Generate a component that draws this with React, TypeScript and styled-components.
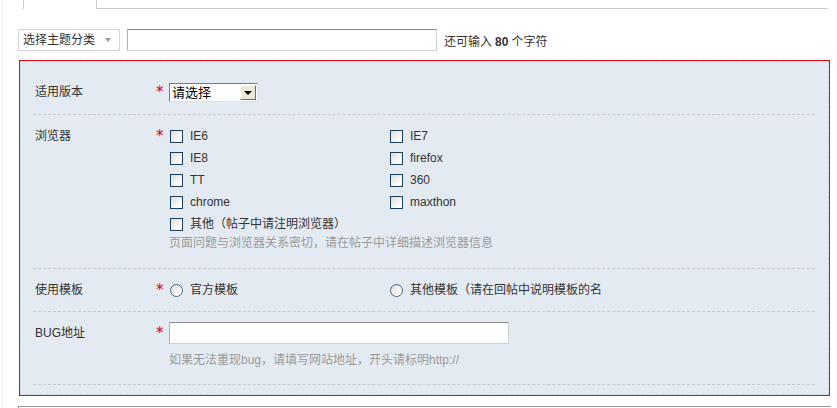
import React from 'react';
import styled, { createGlobalStyle } from 'styled-components';

const GlobalStyle = createGlobalStyle`
  html, body { margin: 0; padding: 0; background: #fff; }
  body {
    font-family: "Liberation Sans", "Noto Sans CJK SC", sans-serif;
    font-size: 12px;
    color: #333;
  }
`;

const Page = styled.div`
  margin-left: 2px;
  padding-left: 15px;
  border-left: 1px solid #f0f0f0;
  width: 813px;
  height: 408px;
  overflow: hidden;
`;

const TabBar = styled.div`
  display: flex;
  margin-left: 5px;
  width: 805px;
`;

const Tab = styled.div`
  width: 72px;
  height: 9px;
  border-left: 1px solid #ccc;
  border-right: 1px solid #ccc;
  background: #fff;
`;

const TabRest = styled.div`
  flex: 1;
  height: 8px;
  border-bottom: 1px solid #ccc;
`;

const Toolbar = styled.div`
  display: flex;
  align-items: center;
  gap: 7px;
  margin-top: 20px;
  height: 22px;
`;

const TopicSelect = styled.div`
  box-sizing: border-box;
  width: 102px;
  height: 22px;
  border: 1px solid #d4d4d4;
  background: #fff;
  display: flex;
  align-items: center;
  justify-content: space-between;
  padding: 0 8px 0 4px;
  color: #333;
  line-height: 20px;
`;

const Caret = styled.span`
  width: 0;
  height: 0;
  border-left: 3px solid transparent;
  border-right: 3px solid transparent;
  border-top: 4px solid #999;
`;

const TextInput = styled.div<{ $w: number }>`
  box-sizing: border-box;
  width: ${p => p.$w}px;
  height: 22px;
  background: #fff;
  border: 1px solid #d0d0d0;
  border-top-color: #8a8a8a;
  border-left-color: #b0b0b0;
`;

const Counter = styled.span`
  color: #333;
  b { font-weight: bold; margin: 0 3px; }
`;

const Panel = styled.div`
  margin: 9px 0 0 1px;
  width: 809px;
  border: 1px solid #d40f1f;
`;

const PanelInner = styled.div`
  border: 1px dashed #d4d9e0;
  background: #e4eaf1;
  padding: 0 13px 9px 12px;
`;

const Row = styled.div<{ $pt: number; $pb: number; $lh: number }>`
  display: grid;
  grid-template-columns: 123px 13px 1fr;
  align-items: start;
  padding: ${p => p.$pt}px 0 ${p => p.$pb}px;
  border-bottom: 1px dashed #c6cbd2;
  line-height: ${p => p.$lh}px;
`;

const Label = styled.div`
  padding-left: 2px;
  color: #333;
  height: 100%;
`;

const Star = styled.span`
  color: #e00000;
  font-family: "DejaVu Sans", sans-serif;
  font-size: 15px;
  line-height: inherit;
  height: 100%;
  overflow: hidden;
`;

const Field = styled.div`
  display: flex;
  flex-direction: column;
`;

const VersionSelect = styled.div`
  box-sizing: border-box;
  width: 89px;
  height: 19px;
  display: flex;
  align-items: center;
  justify-content: space-between;
  background: #fff;
  border: 1px solid;
  border-color: #7a7a7a #e0e0e0 #e0e0e0 #7a7a7a;
  padding-left: 2px;
  color: #000;
  font-size: 13px;
`;

const DropButton = styled.span`
  box-sizing: border-box;
  width: 16px;
  height: 15px;
  margin-right: 1px;
  background: #ece9d8;
  border: 1px solid;
  border-color: #fff #716f64 #716f64 #fff;
  display: flex;
  align-items: center;
  justify-content: center;
  &::after {
    content: '';
    border-left: 4px solid transparent;
    border-right: 4px solid transparent;
    border-top: 4px solid #000;
  }
`;

const CheckGrid = styled.div`
  display: grid;
  grid-template-columns: 220px 1fr;
`;

const Option = styled.label<{ $span?: boolean }>`
  display: flex;
  align-items: center;
  gap: 7px;
  height: 22px;
  color: #333;
  grid-column: ${p => (p.$span ? '1 / span 2' : 'auto')};
`;

const Box = styled.span<{ $round?: boolean }>`
  box-sizing: border-box;
  width: 13px;
  height: 13px;
  margin-left: 1px;
  border: 1px solid ${p => (p.$round ? '#4a6580' : '#1d3f5f')};
  border-radius: ${p => (p.$round ? '50%' : '0')};
  background: linear-gradient(135deg, #dcdcd7 0%, #fff 80%);
`;

const Hint = styled.div<{ $mt?: number }>`
  color: #9a9a9a;
  line-height: 16px;
  margin-top: ${p => p.$mt || 0}px;
`;

const BottomBox = styled.div`
  margin-top: 10px;
  width: 812px;
  height: 20px;
  border-top: 1px solid #9a9a9a;
  border-left: 1px solid #9a9a9a;
`;

const browsers = ['IE6', 'IE7', 'IE8', 'firefox', 'TT', '360', 'chrome', 'maxthon'];

export default function App() {
  return (
    <>
      <GlobalStyle />
      <Page>
        <TabBar>
          <Tab />
          <TabRest />
        </TabBar>
        <Toolbar>
          <TopicSelect>选择主题分类<Caret /></TopicSelect>
          <TextInput $w={310} />
          <Counter>还可输入<b>80</b>个字符</Counter>
        </Toolbar>
        <Panel>
          <PanelInner>
            <Row $pt={21} $pb={12} $lh={19}>
              <Label>适用版本</Label>
              <Star>*</Star>
              <Field>
                <VersionSelect>请选择<DropButton /></VersionSelect>
              </Field>
            </Row>
            <Row $pt={10} $pb={17} $lh={22}>
              <Label>浏览器</Label>
              <Star>*</Star>
              <Field>
                <CheckGrid>
                  {browsers.map(b => (
                    <Option key={b}><Box />{b}</Option>
                  ))}
                  <Option $span><Box />其他（帖子中请注明浏览器）</Option>
                </CheckGrid>
                <Hint>页面问题与浏览器关系密切，请在帖子中详细描述浏览器信息</Hint>
              </Field>
            </Row>
            <Row $pt={10} $pb={10} $lh={22}>
              <Label>使用模板</Label>
              <Star>*</Star>
              <CheckGrid>
                <Option><Box $round />官方模板</Option>
                <Option><Box $round />其他模板（请在回帖中说明模板的名</Option>
              </CheckGrid>
            </Row>
            <Row $pt={10} $pb={16} $lh={22}>
              <Label>BUG地址</Label>
              <Star>*</Star>
              <Field>
                <TextInput $w={340} />
                <Hint $mt={8}>如果无法重现bug，请填写网站地址，开头请标明http://</Hint>
              </Field>
            </Row>
          </PanelInner>
        </Panel>
        <BottomBox />
      </Page>
    </>
  );
}
